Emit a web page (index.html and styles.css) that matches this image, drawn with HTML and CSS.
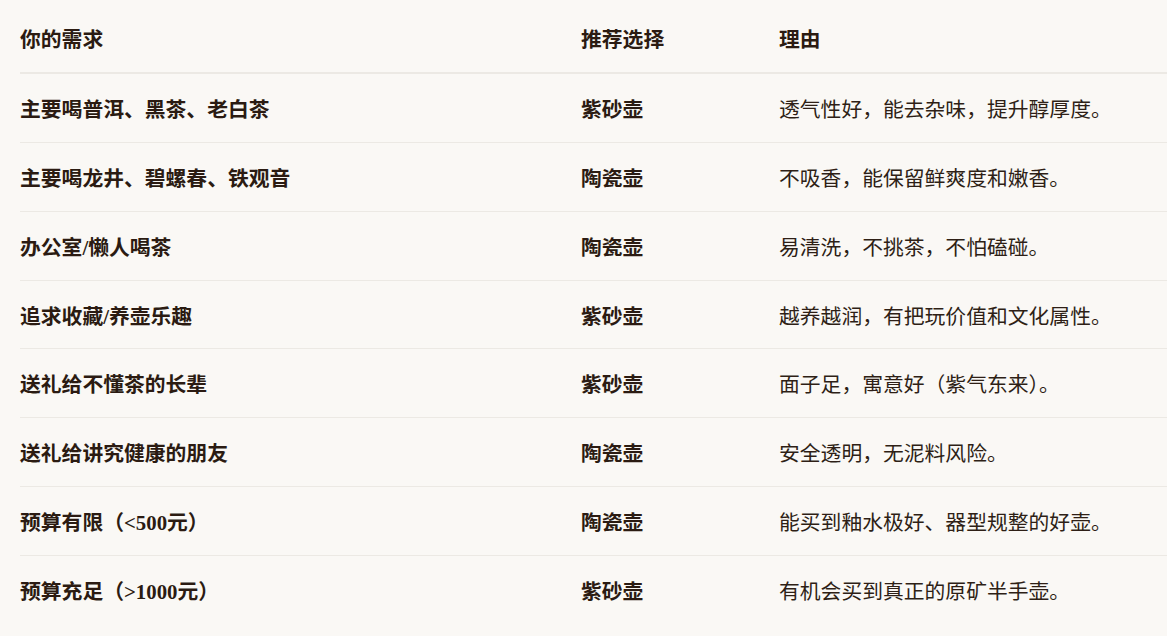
FILE: index.html
```html
<!DOCTYPE html>
<html lang="zh-CN">
<head>
<meta charset="utf-8">
<title>紫砂壶与陶瓷壶选择</title>
<link rel="stylesheet" href="styles.css">
</head>
<body>
<div class="wrap">
<table class="guide">
  <thead>
    <tr><th class="c1">你的需求</th><th class="c2">推荐选择</th><th class="c3">理由</th></tr>
  </thead>
  <tbody>
    <tr><td class="need">主要喝普洱、黑茶、老白茶</td><td class="pick">紫砂壶</td><td class="why">透气性好，能去杂味，提升醇厚度。</td></tr>
    <tr><td class="need">主要喝龙井、碧螺春、铁观音</td><td class="pick">陶瓷壶</td><td class="why">不吸香，能保留鲜爽度和嫩香。</td></tr>
    <tr><td class="need">办公室/懒人喝茶</td><td class="pick">陶瓷壶</td><td class="why">易清洗，不挑茶，不怕磕碰。</td></tr>
    <tr><td class="need">追求收藏/养壶乐趣</td><td class="pick">紫砂壶</td><td class="why">越养越润，有把玩价值和文化属性。</td></tr>
    <tr><td class="need">送礼给不懂茶的长辈</td><td class="pick">紫砂壶</td><td class="why">面子足，寓意好（紫气东来）。</td></tr>
    <tr><td class="need">送礼给讲究健康的朋友</td><td class="pick">陶瓷壶</td><td class="why">安全透明，无泥料风险。</td></tr>
    <tr><td class="need">预算有限（&lt;500元）</td><td class="pick">陶瓷壶</td><td class="why">能买到釉水极好、器型规整的好壶。</td></tr>
    <tr><td class="need">预算充足（&gt;1000元）</td><td class="pick">紫砂壶</td><td class="why">有机会买到真正的原矿半手壶。</td></tr>
  </tbody>
</table>
</div>
</body>
</html>
```

FILE: styles.css
```css
html, body {
  margin: 0;
  padding: 0;
  background: #faf8f5;
  overflow: hidden;
}
body {
  font-family: "Liberation Serif", "Noto Sans CJK SC", serif;
  color: #2b1b12;
}
.wrap {
  padding: 4px 0 0 20px;
}
.guide {
  width: 100%;
  border-collapse: collapse;
  table-layout: fixed;
  font-size: 20.8px;
  line-height: 33.3px;
}
.guide th, .guide td {
  text-align: left;
  padding: 19px 0 15.6px;
  vertical-align: middle;
  white-space: nowrap;
}
.guide th {
  font-weight: 700;
  border-bottom: 2px solid #ece9e4;
}
.guide td {
  border-bottom: 1px solid #ece9e4;
}
.guide tbody tr:last-child td {
  border-bottom: none;
}
.c1 { width: 561px; }
.c2 { width: 198px; }
.need, .pick { font-weight: 700; }
.why { font-weight: 400; color: #2e1f16; }
```
